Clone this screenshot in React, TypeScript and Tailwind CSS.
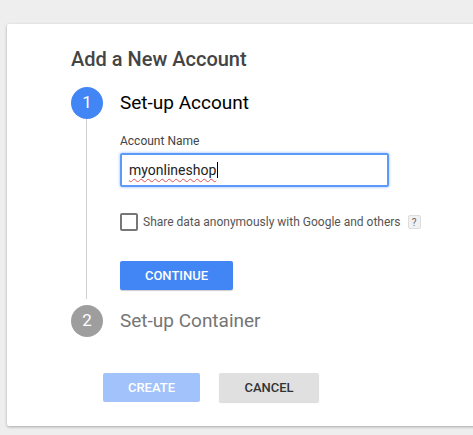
export default function App() {
  return (
    <div className="h-[435px] w-[473px] overflow-hidden bg-[#eeeeee] pt-[24px] pl-[7px] font-['Roboto',sans-serif]">
      <div className="h-[402px] w-[500px] rounded-[2px] bg-white pt-[23px] pl-[64px] shadow-[0_1px_3px_rgba(0,0,0,0.3)]">
        <h1 className="text-[20px] leading-[24px] font-medium text-[#444]">Add a New Account</h1>

        <div className="mt-[16px] flex">
          <div className="flex w-[49px] flex-col items-start">
            <div className="flex h-[32px] w-[32px] items-center justify-center rounded-full bg-[#4285f4] text-[17px] text-white">1</div>
            <div className="ml-[15px] h-[180px] w-px bg-[#cfcfcf]" />
          </div>
          <div className="flex flex-col">
            <div className="flex h-[32px] items-center text-[19px] text-black">Set-up Account</div>
            <label className="mt-[15px] text-[12px] leading-[14px] text-[#444]">Account Name</label>
            <div className="mt-[5px] flex h-[34px] w-[269px] items-center rounded-[2px] border-2 border-[#5b9bf7] pl-[7px] shadow-[0_0_3px_rgba(66,133,244,0.6)]">
              <span className="text-[14px] text-[#222] underline decoration-[#e05050] decoration-wavy decoration-1 underline-offset-[3px]">myonlineshop</span>
              <span className="ml-px h-[16px] w-px bg-black" />
            </div>
            <div className="mt-[26px] flex h-[18px] items-center">
              <div className="h-[18px] w-[18px] rounded-[2px] border-2 border-[#777]" />
              <span className="ml-[5px] text-[12px] text-[#555]">Share data anonymously with Google and others</span>
              <span className="ml-[7px] flex h-[14px] w-[13px] items-center justify-center rounded-[2px] border border-[#ddd] bg-[#f1f1f1] text-[10px] text-[#666]">?</span>
            </div>
            <button className="mt-[30px] h-[29px] w-[113px] rounded-[2px] bg-[#4285f4] text-[13px] font-medium text-white shadow-[0_1px_1px_rgba(0,0,0,0.2)]">CONTINUE</button>
          </div>
        </div>

        <div className="mt-[6px] flex items-center">
          <div className="flex h-[32px] w-[32px] items-center justify-center rounded-full bg-[#9e9e9e] text-[17px] text-white">2</div>
          <span className="ml-[17px] text-[19px] text-[#757575]">Set-up Container</span>
        </div>

        <div className="mt-[36px] ml-[32px] flex gap-[19px]">
          <button className="h-[29px] w-[97px] rounded-[2px] bg-[#a1c2fa] text-[13px] font-medium text-white">CREATE</button>
          <button className="h-[29px] w-[100px] rounded-[2px] bg-[#e0e0e0] text-[13px] font-medium text-[#333] shadow-[0_1px_1px_rgba(0,0,0,0.15)]">CANCEL</button>
        </div>
      </div>
    </div>
  );
}
